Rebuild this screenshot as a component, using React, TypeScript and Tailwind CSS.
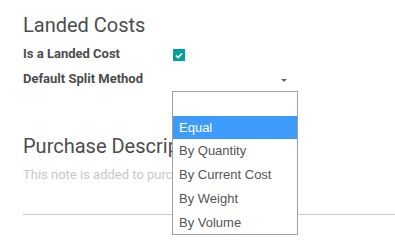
import React from "react"

const options = ["", "Equal", "By Quantity", "By Current Cost", "By Weight", "By Volume"]
const rowHeights = ["h-[24px]", "h-[23px]", "h-[24px]", "h-[24px]", "h-[24px]", "h-[23px]"]

export default function App() {
  return (
    <div className="relative w-[395px] h-[247px] overflow-hidden bg-white text-[#4c4c4c] [font-family:Roboto,'Liberation_Sans',sans-serif]">
      <div className="pl-[23px] pt-[13px]">
        {/* Landed costs group */}
        <h2 className="h-[24px] text-[20px] leading-[24px] font-normal">Landed Costs</h2>
        <div className="mt-[4px]">
          <div className="flex h-[25px] items-start">
            <div className="w-[150px] text-[13px] leading-[25px] font-bold">Is a Landed Cost</div>
            <div className="mt-[8px] flex h-[12px] w-[12px] items-center justify-center bg-[#00a09d]">
              <svg width="8" height="7" viewBox="0 0 8 7">
                <path d="M1 3.6 L3.1 5.6 L7 1.4" fill="none" stroke="white" strokeWidth="1.6" />
              </svg>
            </div>
          </div>
          <div className="flex h-[25px] items-start">
            <div className="w-[150px] text-[13px] leading-[25px] font-bold">Default Split Method</div>
            <div className="relative h-[25px] w-[122px]">
              <svg className="absolute left-[108px] top-[13px]" width="6" height="3" viewBox="0 0 6 3">
                <path d="M0 0 L6 0 L3 3 Z" fill="#666" />
              </svg>
            </div>
          </div>
        </div>

        {/* Purchase description */}
        <h2 className="mt-[43px] h-[24px] text-[20px] leading-[24px] font-normal">Purchase Description</h2>
        <div className="mt-[7px] h-[20px] text-[13px] leading-[20px] text-[#c8c8c8]">
          This note is added to purchase orders.
        </div>
        <div className="mt-[29px] h-px bg-[#c8c8c8]" />
      </div>

      {/* open select list */}
      <div className="absolute left-[172px] top-[91px] w-[126px] border border-[#a0a0a0] bg-white text-[13px] text-[#555] [font-family:'Liberation_Sans',Arial,sans-serif]">
        {options.map((opt, i) => (
          <div
            key={i}
            className={`${rowHeights[i]} flex items-center pl-[6px] ${opt === "Equal" ? "bg-[#3d9bfb] text-white" : ""}`}
          >
            {opt}
          </div>
        ))}
      </div>
    </div>
  )
}
